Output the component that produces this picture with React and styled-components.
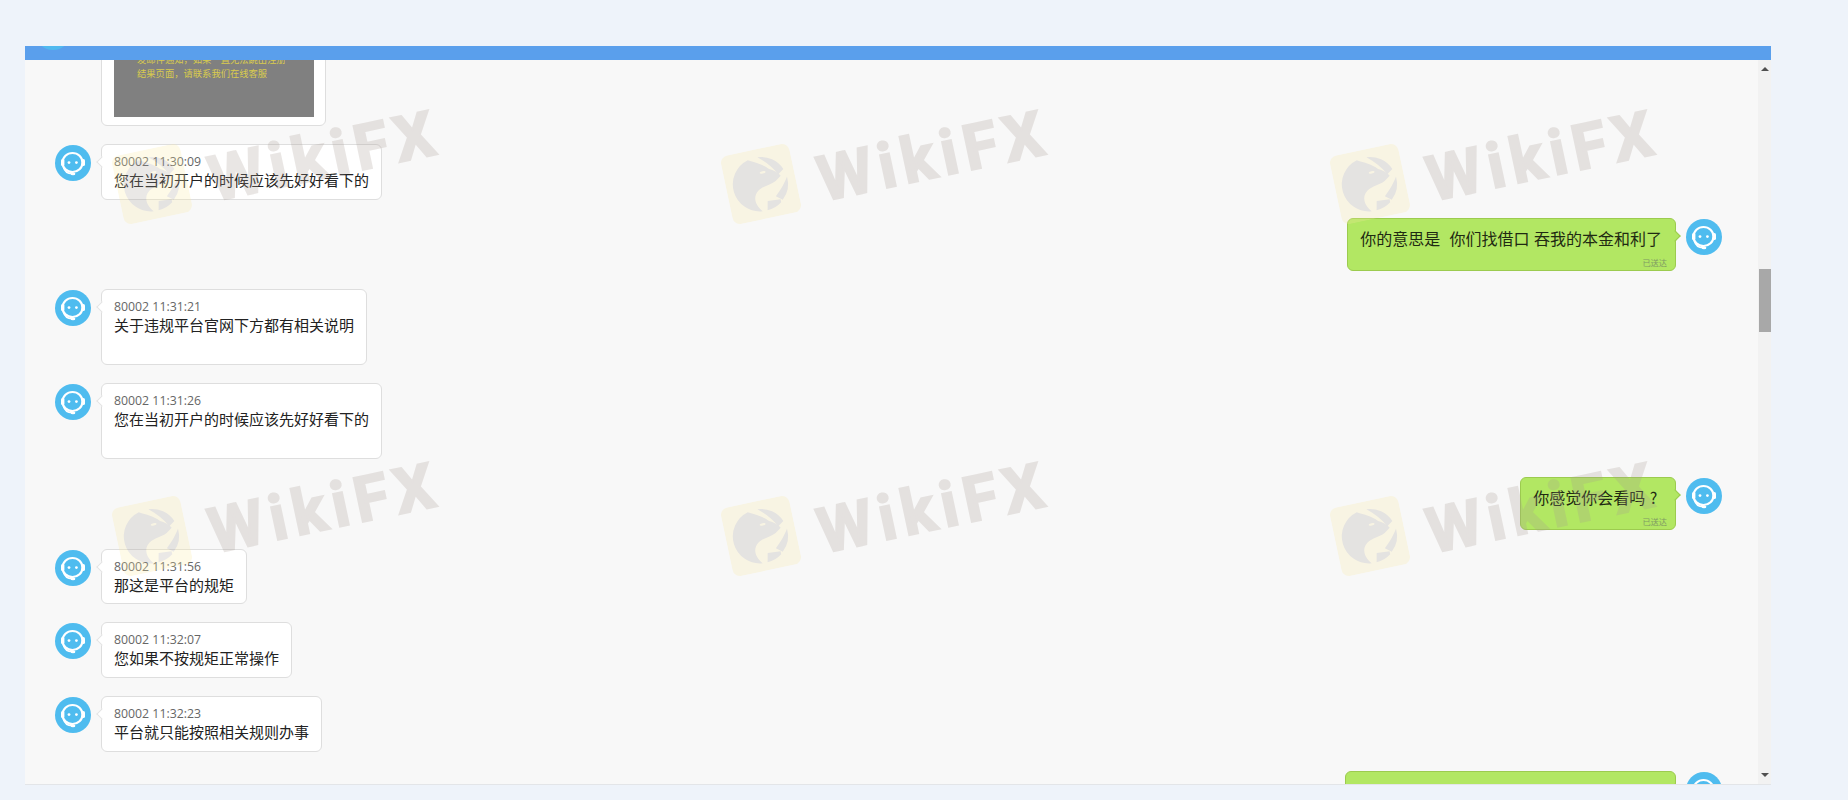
import React from "react";
import styled, { createGlobalStyle } from "styled-components";

const GlobalStyle = createGlobalStyle`
  html, body { margin: 0; padding: 0; height: 100%; background: #eef3fa; overflow: hidden; }
  body { font-family: "Noto Sans CJK SC", "Open Sans", sans-serif; }
  * { box-sizing: border-box; }
`;

const Page = styled.div`
  height: 800px;
  padding: 46px 77px 15px 25px;
  background: #eef3fa;
`;

const Panel = styled.div`
  position: relative;
  height: 739px;
  display: flex;
  flex-direction: column;
  background: #f8f8f8;
  border-bottom: 1px solid #e3e5e8;
  overflow: hidden;
`;

const TopBar = styled.div`
  position: relative;
  flex: 0 0 14px;
  background: #5a9fec;
  overflow: hidden;
`;

const AvatarPeek = styled.div`
  position: absolute;
  left: 10px;
  top: -32px;
  width: 36px;
  height: 36px;
  border-radius: 50%;
  background: #50b9ef;
`;

const Body = styled.div`
  flex: 1;
  min-height: 0;
  display: flex;
`;

const Messages = styled.div`
  flex: 1;
  min-width: 0;
  overflow: hidden;
  padding: 0 36px 0 30px;
  display: flex;
  flex-direction: column;
`;

const Row = styled.div`
  display: flex;
  flex: 0 0 auto;
  justify-content: ${(p) => (p.$mine ? "flex-end" : "flex-start")};
  gap: 10px;
  margin-top: ${(p) => p.$gap}px;
`;

const AvatarWrap = styled.div`
  flex: 0 0 36px;
  width: 36px;
  height: 36px;
  margin-top: 1px;
`;

const Bubble = styled.div`
  position: relative;
  height: ${(p) => p.$height}px;
  padding: ${(p) => (p.$mine ? "9px 13px 3px 12px" : "7px 12px 6px")};
  border-radius: 6px;
  border: 1px solid ${(p) => (p.$mine ? "#9ccb4f" : "#dedede")};
  background: ${(p) => (p.$mine ? "#b2e763" : "#fff")};

  &::before {
    content: "";
    position: absolute;
    top: 13px;
    width: 7px;
    height: 7px;
    transform: rotate(45deg);
    background: ${(p) => (p.$mine ? "#b2e763" : "#fff")};
    ${(p) =>
      p.$mine
        ? "right: -4px; border-top: 1px solid #9ccb4f; border-right: 1px solid #9ccb4f;"
        : "left: -4px; border-left: 1px solid #e4e4e4; border-bottom: 1px solid #e4e4e4;"}
  }
`;

const ImageBubble = styled(Bubble)`
  padding: 12px 11px 7px 12px;
`;

const Shot = styled.div`
  width: 200px;
  height: 91px;
  padding: 27px 0 0 23px;
  background: #808080;
  color: #d9cb4e;
  font-size: 9.3px;
  line-height: 13.5px;
  white-space: nowrap;
`;

const Meta = styled.div`
  font-family: "Open Sans", sans-serif;
  font-size: 12.3px;
  line-height: 20px;
  color: #666;
  white-space: nowrap;
`;

const Text = styled.div`
  margin-top: -2px;
  font-size: 15px;
  line-height: 20px;
  color: #222;
  white-space: pre;
`;

const MineText = styled.div`
  font-size: 16px;
  line-height: 20px;
  word-spacing: 1px;
  color: #1f2a12;
  white-space: pre;
`;

const Sent = styled.div`
  margin-top: 9px;
  margin-right: -5px;
  text-align: right;
  font-size: 8.2px;
  line-height: 10px;
  color: #7f9a63;
`;

const Scrollbar = styled.div`
  flex: 0 0 13px;
  padding-left: 1px;
  display: flex;
  flex-direction: column;
  align-items: stretch;
  background: #f2f2f2;
`;

const ArrowUp = styled.div`
  width: 0;
  height: 0;
  margin: 7px 0 0 2px;
  border-left: 4px solid transparent;
  border-right: 4px solid transparent;
  border-bottom: 4px solid #505050;
`;

const Thumb = styled.div`
  height: 63px;
  margin-top: 198px;
  background: #a8a8a8;
`;

const ArrowDown = styled.div`
  width: 0;
  height: 0;
  margin: auto 0 7px 2px;
  border-left: 4px solid transparent;
  border-right: 4px solid transparent;
  border-top: 4px solid #505050;
`;

const Watermarks = styled.div`
  position: absolute;
  left: 92px;
  top: 103px;
  display: grid;
  grid-template-columns: repeat(3, 609px);
  grid-auto-rows: 352px;
  pointer-events: none;
`;

const Mark = styled.div`
  display: flex;
  align-items: center;
  gap: 22px;
  width: 360px;
  height: 70px;
  opacity: 0.24;
  transform: rotate(-12deg);
  transform-origin: 35px 35px;
`;

const MarkText = styled.span`
  font-family: Roboto, "Open Sans", sans-serif;
  font-weight: 700;
  font-size: 63px;
  line-height: 70px;
  letter-spacing: 6.5px;
  color: #a89a92;
  -webkit-text-stroke: 2px #a89a92;
  transform: translateY(9px);
`;

const HeadsetAvatar = () => (
  <svg width="36" height="36" viewBox="0 0 36 36">
    <circle cx="18" cy="18" r="18" fill="#4fbcef" />
    <ellipse cx="17.5" cy="17.5" rx="10" ry="9.5" fill="none" stroke="#fff" strokeWidth="2.2" />
    <rect x="6" y="14" width="3.4" height="7" rx="1.6" fill="#fff" />
    <rect x="26.6" y="14" width="3.4" height="7" rx="1.6" fill="#fff" />
    <path d="M8 21 C9.5 26.5 13 28.8 17 28.8" fill="none" stroke="#fff" strokeWidth="1.5" />
    <ellipse cx="18" cy="28.8" rx="2.4" ry="1.5" fill="#fff" />
    <circle cx="14" cy="17.6" r="1.4" fill="#fff" />
    <circle cx="21.4" cy="17.6" r="1.4" fill="#fff" />
  </svg>
);

const EagleLogo = () => (
  <svg width="70" height="70" viewBox="0 0 70 70">
    <rect width="70" height="70" rx="8" fill="#fbeba3" />
    <g fill="#a9a29a">
      <path d="M27 9 A27 27 0 0 0 31 62 C25 55 24 46 31 41 C37 37 44 38 50 35 L56 31 C54 27 50 24 46 22 C41 16 34 13 27 9 Z" />
      <path d="M37 8 A27 27 0 0 1 60 25 L54 29 C50 21 44 14 37 8 Z" />
      <path d="M62 33 A27 27 0 0 1 53 55 L47 50 C53 45 59 38 62 33 Z" />
      <path d="M51 57 A27 27 0 0 1 36 62 L38 53 L51 54 Z" />
    </g>
    <ellipse cx="39" cy="24" rx="3" ry="1.2" fill="#fbeba3" />
  </svg>
);

const rows = [
  { meta: "80002 11:30:09", text: "您在当初开户的时候应该先好好看下的", gap: 18, height: 56 },
  { mine: true, text: "你的意思是  你们找借口 吞我的本金和利了", sent: "已送达", gap: 18, height: 53 },
  { meta: "80002 11:31:21", text: "关于违规平台官网下方都有相关说明", gap: 18, height: 76 },
  { meta: "80002 11:31:26", text: "您在当初开户的时候应该先好好看下的", gap: 18, height: 76 },
  { mine: true, text: "你感觉你会看吗 ? ", sent: "已送达", gap: 18, height: 53 },
  { meta: "80002 11:31:56", text: "那这是平台的规矩", gap: 19, height: 55 },
  { meta: "80002 11:32:07", text: "您如果不按规矩正常操作", gap: 18, height: 56 },
  { meta: "80002 11:32:23", text: "平台就只能按照相关规则办事", gap: 18, height: 56 },
  { mine: true, text: "你们的规矩，为什么我入金时你们不告诉我", sent: "已送达", gap: 19, height: 53 },
];

export default function App() {
  return (
    <>
      <GlobalStyle />
      <Page>
        <Panel>
          <TopBar>
            <AvatarPeek />
          </TopBar>
          <Body>
            <Messages>
              <Row $gap={-47}>
                <AvatarWrap>
                  <HeadsetAvatar />
                </AvatarWrap>
                <ImageBubble $height={113}>
                  <Shot>
                    <div>发邮件通知，如果一直无法跳出注册</div>
                    <div>结果页面，请联系我们在线客服</div>
                  </Shot>
                </ImageBubble>
              </Row>
              {rows.map((r, i) => (
                <Row key={i} $mine={r.mine} $gap={r.gap}>
                  {r.mine ? (
                    <>
                      <Bubble $mine $height={r.height}>
                        <MineText>{r.text}</MineText>
                        <Sent>{r.sent}</Sent>
                      </Bubble>
                      <AvatarWrap>
                        <HeadsetAvatar />
                      </AvatarWrap>
                    </>
                  ) : (
                    <>
                      <AvatarWrap>
                        <HeadsetAvatar />
                      </AvatarWrap>
                      <Bubble $height={r.height}>
                        <Meta>{r.meta}</Meta>
                        <Text>{r.text}</Text>
                      </Bubble>
                    </>
                  )}
                </Row>
              ))}
            </Messages>
            <Scrollbar>
              <ArrowUp />
              <Thumb />
              <ArrowDown />
            </Scrollbar>
          </Body>
          <Watermarks>
            {Array.from({ length: 6 }, (_, i) => (
              <Mark key={i}>
                <EagleLogo />
                <MarkText>WikiFX</MarkText>
              </Mark>
            ))}
          </Watermarks>
        </Panel>
      </Page>
    </>
  );
}
